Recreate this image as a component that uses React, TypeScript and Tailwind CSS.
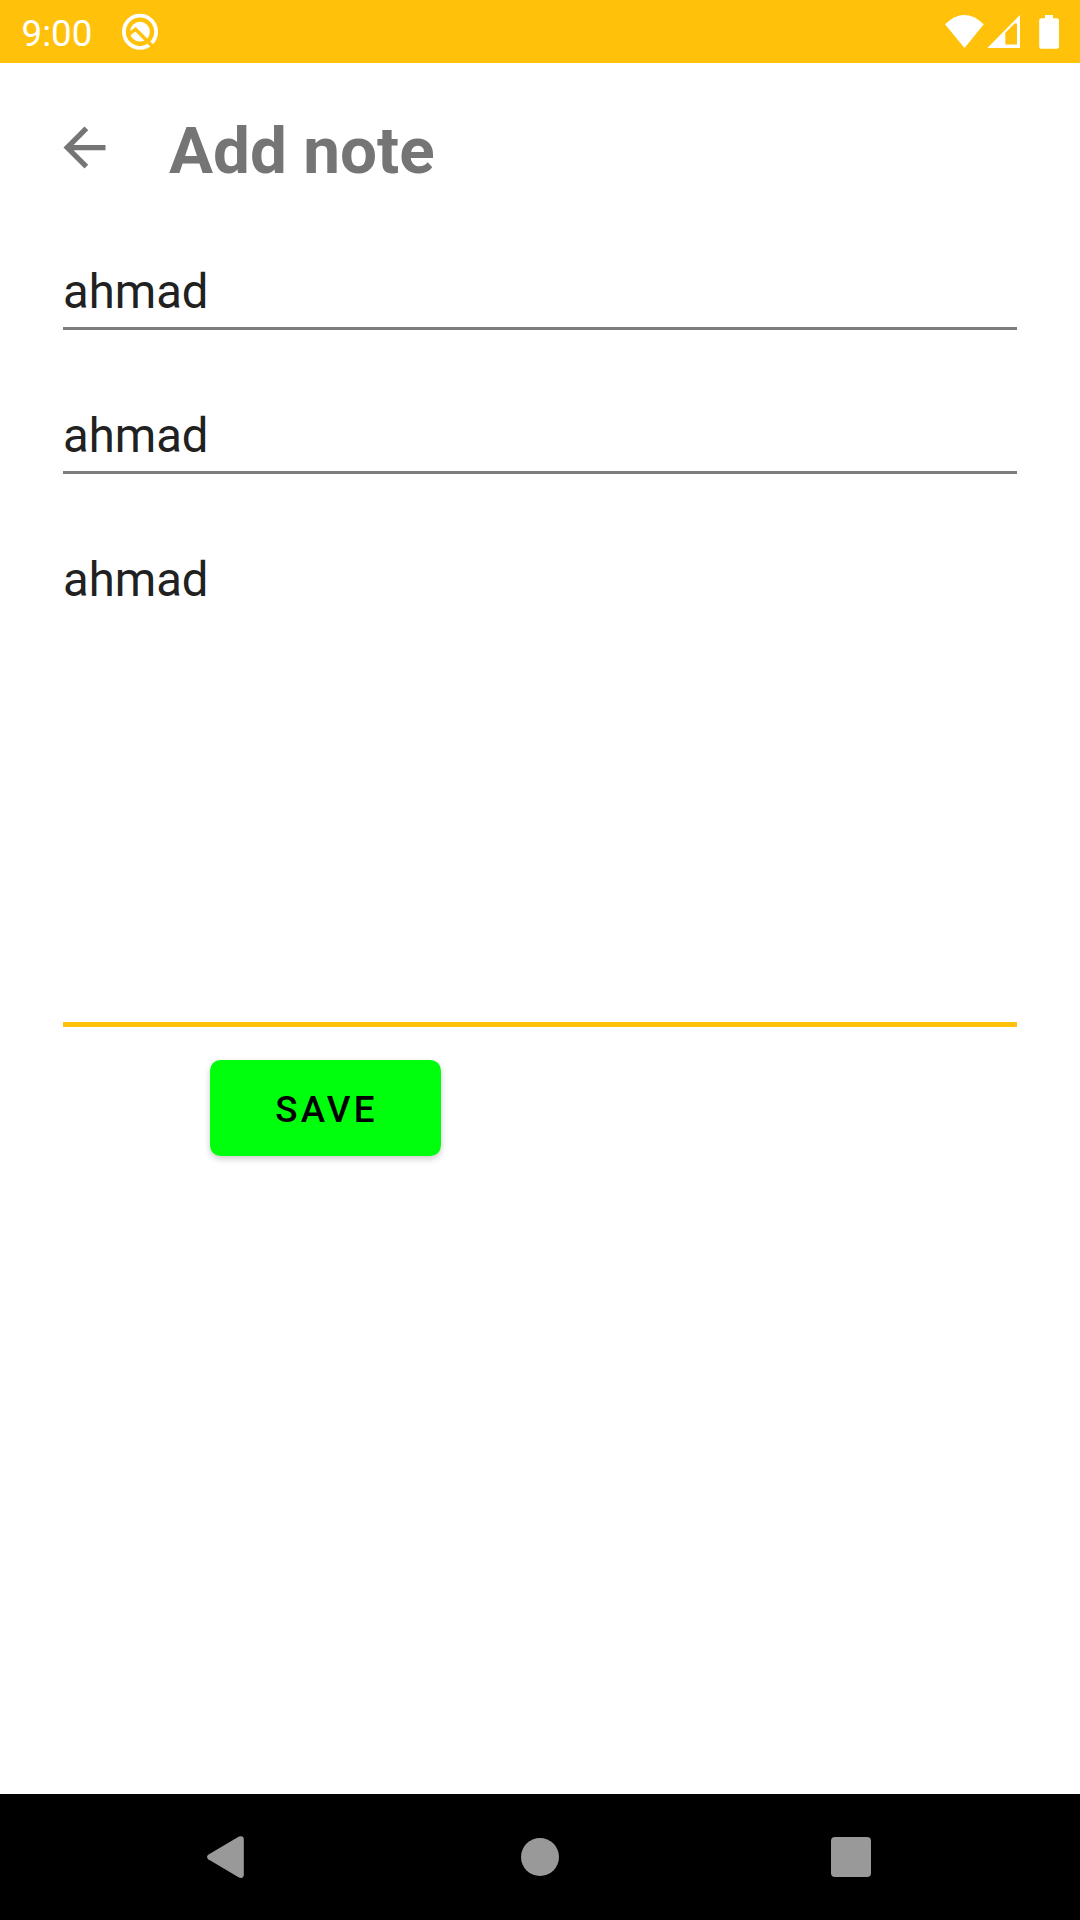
import React from "react";

function StatusBar() {
  return (
    <header className="flex h-[63px] items-center bg-[#ffc10a] pl-[21.5px] pr-[20px] text-white">
      <span className="pt-[4px] text-[36.75px] leading-[43px]">9:00</span>
      <svg className="ml-[28.5px] h-[38px] w-[38px]" viewBox="0 0 38 38" fill="none">
        <circle cx="19" cy="18.7" r="16.1" stroke="currentColor" strokeWidth="3.8" />
        <circle cx="19" cy="18.7" r="9.9" fill="currentColor" />
        <path d="M7.8 21.4L14.6 16.2 32.5 34.2" stroke="#ffc10a" strokeWidth="3.5" />
      </svg>
      <div className="flex-1" />
      <svg className="h-[35px] w-[116px]" viewBox="944 13 116 35" fill="currentColor">
        <path d="M945 23.2Q964.3 4.8 983.8 23.2L964.5 47Z" />
        <path fillRule="evenodd" d="M987.3 47L1020 14V47ZM1005.3 31.8V43.6H1017V22.6H1014.5Z" />
        <path d="M1045 14H1053V17.2H1057Q1059 17.2 1059 19.2V45.8Q1059 47.8 1057 47.8H1041.2Q1039.2 47.8 1039.2 45.8V19.2Q1039.2 17.2 1041.2 17.2H1045Z" />
      </svg>
    </header>
  );
}

function Field({ className, value }: { className: string; value: string }) {
  return (
    <div className={className}>
      <span className="block pt-px text-[47.25px] leading-[56px] text-[#212121]">{value}</span>
    </div>
  );
}

function NavigationBar() {
  return (
    <nav className="flex h-[126px] items-center bg-black pl-[206px] pr-[209px] text-[#999999]">
      <svg className="h-[42px] w-[38px]" viewBox="0 0 38 42" fill="currentColor">
        <path d="M2.2 18.8L33 .5Q37.8-1 37.8 3.5V38.5Q37.8 43 33 41.5L2.2 23.2Q-.2 21 2.2 18.8Z" />
      </svg>
      <div className="ml-[277px] h-[38px] w-[38px] rounded-full bg-[#999999]" />
      <div className="ml-auto h-[40px] w-[40px] rounded-[4px] bg-[#999999]" />
    </nav>
  );
}

export default function App() {
  return (
    <div className="flex h-[1920px] w-[1080px] flex-col overflow-hidden bg-white font-['Roboto',sans-serif]">
      <StatusBar />
      <main className="flex flex-1 flex-col px-[63px]">
        <div className="mt-[48px] flex h-[78px] items-center">
          <svg className="-ml-[10.5px] mb-[5px] h-[63px] w-[63px]" viewBox="0 0 24 24" fill="#757575">
            <path d="M20 11H7.83l5.59-5.59L12 4l-8 8 8 8 1.41-1.41L7.83 13H20v-2z" />
          </svg>
          <h1 className="ml-[53.5px] pt-[2px] text-[65.6px] leading-[78px] font-bold text-[#757575]">Add note</h1>
        </div>
        <Field className="mt-[74px] h-[67px] border-b-[3px] border-[#7d7d7d]" value="ahmad" />
        <Field className="mt-[77px] h-[67px] border-b-[3px] border-[#7d7d7d]" value="ahmad" />
        <Field className="mt-[77px] h-[476px] border-b-[5px] border-[#ffc10a]" value="ahmad" />
        <button className="mt-[33px] ml-[147px] h-[96px] w-[231px] rounded-[10.5px] bg-[#00ff0c] pt-[2px] pl-[2px] text-[36.75px] leading-[43px] font-medium tracking-[3.28px] text-black shadow-[0_3px_6px_rgba(0,0,0,0.2)]">
          SAVE
        </button>
      </main>
      <NavigationBar />
    </div>
  );
}
